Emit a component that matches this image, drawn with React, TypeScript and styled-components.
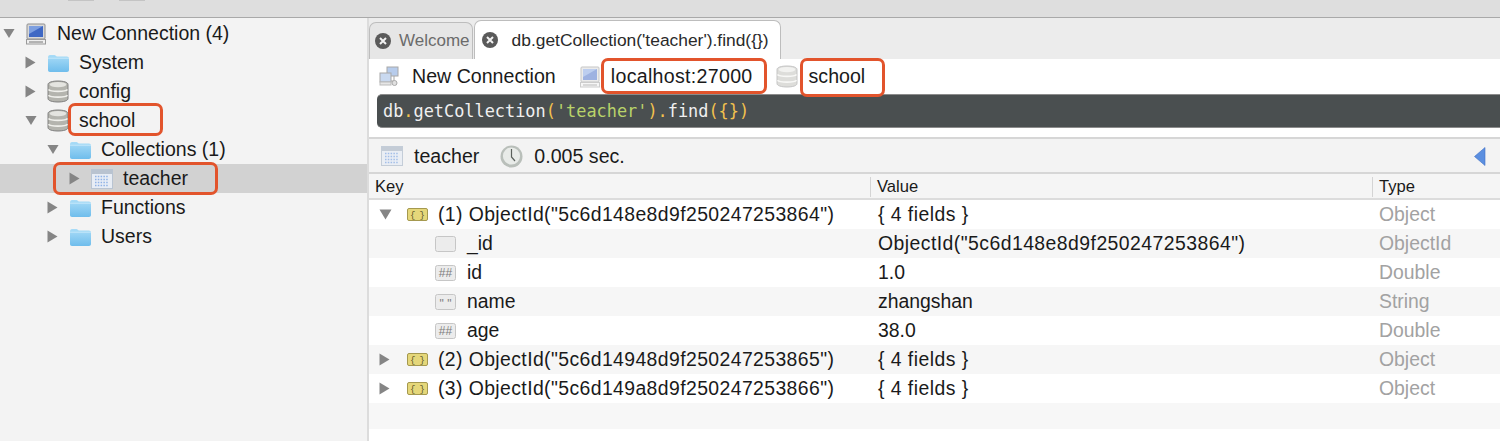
import React from "react";
import styled, { createGlobalStyle } from "styled-components";

const Global = createGlobalStyle`
  html, body {
    margin: 0;
    padding: 0;
    background: #ffffff;
    overflow: hidden;
  }
  body {
    font-family: "Liberation Sans", Arial, sans-serif;
    color: #1a1a1a;
  }
`;

const Window = styled.div`
  width: 1500px;
  height: 441px;
  display: flex;
  flex-direction: column;
  overflow: hidden;
`;
const TitleBar = styled.div`
  height: 17px;
  flex: none;
  display: flex;
  align-items: flex-start;
  gap: 25px;
  padding-left: 68px;
  background: #dedede;
  border-bottom: 1px solid #a9a9a9;
`;
const TitleBump = styled.div`
  width: 26px;
  height: 1px;
  background: #c4c4c4;
`;
const Body = styled.div`
  flex: 1;
  display: flex;
  min-height: 0;
`;

/* left tree */
const Sidebar = styled.aside`
  width: 367px;
  flex: none;
  padding-top: 1px;
  background: #f3f3f3;
  border-right: 2px solid #dcdcdc;
`;
const TreeRow = styled.div<{ $depth: number; $selected?: boolean }>`
  position: relative;
  height: 29px;
  display: flex;
  align-items: center;
  padding-left: ${(p) => 3 + p.$depth * 22}px;
  font-size: 19.5px;
  background: ${(p) => (p.$selected ? "#d2d2d2" : "transparent")};
`;
const Twisty = styled.span`
  width: 12px;
  flex: none;
  margin-right: 10px;
  display: flex;
`;
const IconSlot = styled.span`
  width: 22px;
  height: 24px;
  flex: none;
  margin-right: 10px;
  display: flex;
  align-items: center;
  justify-content: center;
`;
const Callout = styled.div<{ $x: number; $y: number; $w: number; $h: number }>`
  position: absolute;
  left: ${(p) => p.$x}px;
  top: ${(p) => p.$y}px;
  width: ${(p) => p.$w}px;
  height: ${(p) => p.$h}px;
  box-sizing: border-box;
  border: 3.5px solid #e2542c;
  border-radius: 7px;
`;

/* right side */
const Main = styled.main`
  flex: 1;
  min-width: 0;
  display: flex;
  flex-direction: column;
  background: #ffffff;
`;
const TabBar = styled.div`
  height: 41px;
  flex: none;
  display: flex;
  align-items: flex-end;
  gap: 1px;
  background: #ececec;
`;
const Tab = styled.div<{ $active?: boolean }>`
  height: ${(p) => (p.$active ? 39 : 37)}px;
  box-sizing: border-box;
  display: flex;
  align-items: center;
  padding: ${(p) => (p.$active ? "0 11px 0 7px" : "0 2px 0 5px")};
  font-size: ${(p) => (p.$active ? 17.4 : 17)}px;
  color: ${(p) => (p.$active ? "#2a2a2a" : "#6b6b6b")};
  background: ${(p) => (p.$active ? "#ffffff" : "#e6e6e6")};
  border: 1px solid #bdbdbd;
  border-bottom: none;
  border-radius: 7px 7px 0 0;
`;
const TabClose = styled.span<{ $active?: boolean }>`
  display: flex;
  margin-right: ${(p) => (p.$active ? 14 : 8)}px;
`;
const ConnectionBar = styled.div`
  position: relative;
  height: 35px;
  flex: none;
  display: flex;
  align-items: center;
  padding-left: 10px;
  font-size: 19.6px;
`;
const BarIcon = styled.span<{ $gap: number }>`
  display: flex;
  flex: none;
  margin-right: ${(p) => p.$gap}px;
`;
const BarText = styled.span<{ $gap?: number; $tracking?: number }>`
  margin-right: ${(p) => p.$gap ?? 0}px;
  letter-spacing: ${(p) => p.$tracking ?? 0}px;
  white-space: nowrap;
`;
const QueryBar = styled.div`
  height: 34px;
  flex: none;
  display: flex;
  align-items: center;
  margin-left: 8px;
  padding-left: 6px;
  background: #4a4f50;
  border-top: 1px solid #8c8c8c;
  border-bottom: 1px solid #8c8c8c;
  box-sizing: border-box;
  border-radius: 5px 0 0 5px;
  font: 16.9px "DejaVu Sans Mono", "Liberation Mono", monospace;
  color: #f0f0f0;
  white-space: pre;
`;
const Punct = styled.span`
  color: #f2c14e;
`;
const Str = styled.span`
  color: #b9d36a;
`;
const QueryGap = styled.div`
  height: 9px;
  flex: none;
`;
const ResultBar = styled.div`
  height: 37px;
  flex: none;
  box-sizing: border-box;
  display: flex;
  align-items: center;
  padding: 1px 14px 0 12px;
  font-size: 19.6px;
  background: #f3f3f3;
  border-top: 2px solid #d6d6d6;
  border-bottom: 2px solid #d6d6d6;
`;
const Spacer = styled.div`
  flex: 1;
`;
const Table = styled.div`
  flex: 1;
  display: flex;
  flex-direction: column;
  min-height: 0;
`;
const Columns = styled.div`
  display: grid;
  grid-template-columns: 501px 502px 1fr;
`;
const HeaderRow = styled(Columns)`
  height: 26px;
  flex: none;
  box-sizing: border-box;
  font-size: 16.6px;
  background: #f5f5f5;
  border-bottom: 2px solid #dcdcdc;
`;
const HeaderCell = styled.div<{ $divider?: boolean }>`
  display: flex;
  align-items: center;
  padding-left: 6px;
  margin: 3px 0 1px;
  border-left: ${(p) => (p.$divider ? "1px solid #d4d4d4" : "none")};
`;
const DataRow = styled(Columns)<{ $odd: boolean }>`
  height: 29px;
  flex: none;
  font-size: 19.4px;
  align-items: center;
  background: ${(p) => (p.$odd ? "#ffffff" : "#f6f6f6")};
`;
const KeyCell = styled.div<{ $child?: boolean }>`
  display: flex;
  align-items: center;
  padding-left: ${(p) => (p.$child ? 66 : 10)}px;
  letter-spacing: ${(p) => (p.$child ? 0 : 0.4)}px;
  white-space: nowrap;
`;
const KeyTwisty = styled.span`
  width: 13px;
  flex: none;
  margin-right: 15px;
  display: flex;
`;
const KeyIcon = styled.span<{ $gap: number }>`
  width: 21px;
  flex: none;
  margin-right: ${(p) => p.$gap}px;
  display: flex;
`;
const ValueCell = styled.div<{ $wide: boolean }>`
  padding-left: 8px;
  letter-spacing: ${(p) => (p.$wide ? 0.45 : 0)}px;
  white-space: nowrap;
`;
const TypeCell = styled.div`
  padding-left: 7px;
  color: #a2a2a2;
`;
const TableEnd = styled.div`
  height: 26px;
  flex: none;
  background: #f7f7f7;
`;

const Triangle = ({ open }: { open?: boolean }) =>
  open ? (
    <svg width="13" height="11" viewBox="0 0 13 11">
      <path d="M0.5 0.5H12.5L6.5 10.5Z" fill="#858585" />
    </svg>
  ) : (
    <svg width="11" height="13" viewBox="0 0 11 13">
      <path d="M0.5 0.5L10.5 6.5L0.5 12.5Z" fill="#858585" />
    </svg>
  );

const FolderIcon = () => (
  <svg width="22" height="18" viewBox="0 0 22 18">
    <defs>
      <linearGradient id="folderFill" x1="0" y1="0" x2="0" y2="1">
        <stop offset="0" stopColor="#a9dcf7" />
        <stop offset="1" stopColor="#6fbdec" />
      </linearGradient>
    </defs>
    <path
      d="M1 3.5C1 2.4 1.6 1 3 1H7.5C8.6 1 9 2.6 10 2.6H20C21 2.6 22 3.4 22 4.5V16C22 17 21.2 18 20 18H3C1.8 18 1 17 1 16Z"
      fill="url(#folderFill)"
    />
    <path d="M1 4.2H22" stroke="#cfeefb" strokeWidth="0.8" />
  </svg>
);

const DbIcon = ({ faded }: { faded?: boolean }) => (
  <svg width="22" height="23" viewBox="0 0 22 23" opacity={faded ? 0.45 : 1}>
    <path
      d="M1 4.5C1 2.2 5.5 1 11 1S21 2.2 21 4.5V18.5C21 20.8 16.5 22 11 22S1 20.8 1 18.5Z"
      fill="#b4b4ae"
      stroke="#777"
      strokeWidth="0.9"
    />
    <ellipse cx="11" cy="4.6" rx="8.4" ry="2.6" fill="#e4e4e0" />
    <path d="M1.5 9.6C3.5 12 18.5 12 20.5 9.6" fill="none" stroke="#f0f0ec" strokeWidth="1.6" />
    <path d="M1.5 15.3C3.5 17.7 18.5 17.7 20.5 15.3" fill="none" stroke="#f0f0ec" strokeWidth="1.6" />
  </svg>
);

const ComputerIcon = ({ faded }: { faded?: boolean }) => (
  <svg width="20" height="22" viewBox="0 0 20 22" opacity={faded ? 0.5 : 1}>
    <rect x="1" y="1" width="18" height="15" rx="1" fill="#d8d8d8" stroke="#8f8f8f" />
    <rect x="3" y="3" width="14" height="11" fill="#3f68c4" />
    <path d="M3 3H17L3 11Z" fill="#7d9fe0" />
    <rect x="0.5" y="16.5" width="19" height="4.5" fill="#efefef" stroke="#9a9a9a" />
    <path d="M3 19H17" stroke="#777" />
  </svg>
);

const NetworkIcon = () => (
  <svg width="20" height="21" viewBox="0 0 20 21" opacity="0.75">
    <rect x="8" y="1" width="11" height="9" fill="#9fbbe6" stroke="#8c8c8c" />
    <rect x="1" y="7" width="11" height="9" fill="#b8cdec" stroke="#8c8c8c" />
    <rect x="1" y="16" width="11" height="3" fill="#dedede" stroke="#a5a5a5" />
    <path d="M15 10V15H12" stroke="#888" fill="none" />
    <circle cx="15.5" cy="17" r="2.5" fill="#d6d6d6" stroke="#8e8e8e" />
  </svg>
);

const GridIcon = ({ dim }: { dim?: boolean }) => (
  <svg width="22" height="20" viewBox="0 0 22 20" opacity={dim ? 0.8 : 1}>
    <rect x="0.5" y="0.5" width="21" height="19" fill="#e8edf5" stroke="#b9c4d2" />
    <rect x="1" y="1" width="20" height="4" fill="#b9c3d0" />
    <path
      d="M4 7.5H18M4 10.5H18M4 13.5H18M4 16.5H18"
      stroke="#8fb2e6"
      strokeWidth="1.5"
      strokeDasharray="1.5 1.3"
    />
  </svg>
);

const ClockIcon = () => (
  <svg width="23" height="23" viewBox="0 0 23 23">
    <circle cx="11.5" cy="11.5" r="11" fill="#b9bfba" />
    <circle cx="11.5" cy="11" r="8.6" fill="#e8ebe8" />
    <path d="M11.5 4V12L15 16" fill="none" stroke="#5b605c" strokeWidth="1.2" />
  </svg>
);

const CloseCircle = () => (
  <svg width="16" height="16" viewBox="0 0 16 16">
    <circle cx="8" cy="8" r="8" fill="#5a5a5a" />
    <path d="M5 5L11 11M11 5L5 11" stroke="#f2f2f2" strokeWidth="2" />
  </svg>
);

const BackArrow = () => (
  <svg width="12" height="19" viewBox="0 0 12 19">
    <path d="M11 0.5V18.5L0.5 9.5Z" fill="#5b8fe0" stroke="#3f70c6" strokeWidth="0.6" />
  </svg>
);

const BsonObject = () => (
  <svg width="21" height="13" viewBox="0 0 21 13">
    <rect x="0.5" y="0.5" width="20" height="12" rx="1.5" fill="#e5d77a" stroke="#a5994f" />
    <text x="3" y="9.5" fontSize="9" fontFamily="Liberation Mono" fill="#5a5428">
      {"{"}
    </text>
    <text x="12.5" y="9.5" fontSize="9" fontFamily="Liberation Mono" fill="#5a5428">
      {"}"}
    </text>
  </svg>
);

const FieldIcon = ({ label }: { label: string }) => (
  <svg width="21" height="16" viewBox="0 0 21 16">
    <rect x="0.5" y="0.5" width="20" height="15" rx="2" fill="#ececec" stroke="#c6c6c6" />
    <text
      x="10.5"
      y={label === '" "' ? 14 : 12}
      fontSize="12"
      textAnchor="middle"
      fontFamily="Liberation Sans"
      fill="#7d7d7d"
    >
      {label}
    </text>
  </svg>
);

type TreeNode = {
  label: string;
  depth: number;
  open?: boolean;
  icon: React.ReactNode;
  selected?: boolean;
  callout?: { x: number; y: number; w: number; h: number };
};

const tree: TreeNode[] = [
  { label: "New Connection (4)", depth: 0, open: true, icon: <ComputerIcon /> },
  { label: "System", depth: 1, icon: <FolderIcon /> },
  { label: "config", depth: 1, icon: <DbIcon /> },
  {
    label: "school",
    depth: 1,
    open: true,
    icon: <DbIcon />,
    callout: { x: 68, y: -3, w: 95, h: 33 },
  },
  { label: "Collections (1)", depth: 2, open: true, icon: <FolderIcon /> },
  {
    label: "teacher",
    depth: 3,
    icon: <GridIcon />,
    selected: true,
    callout: { x: 53, y: -2, w: 165, h: 33 },
  },
  { label: "Functions", depth: 2, icon: <FolderIcon /> },
  { label: "Users", depth: 2, icon: <FolderIcon /> },
];

type Doc = {
  key: string;
  value: string;
  type: string;
  kind: "object" | "objectId" | "number" | "string";
  open?: boolean;
};

const docs: Doc[] = [
  { key: '(1) ObjectId("5c6d148e8d9f250247253864")', value: "{ 4 fields }", type: "Object", kind: "object", open: true },
  { key: "_id", value: 'ObjectId("5c6d148e8d9f250247253864")', type: "ObjectId", kind: "objectId" },
  { key: "id", value: "1.0", type: "Double", kind: "number" },
  { key: "name", value: "zhangshan", type: "String", kind: "string" },
  { key: "age", value: "38.0", type: "Double", kind: "number" },
  { key: '(2) ObjectId("5c6d14948d9f250247253865")', value: "{ 4 fields }", type: "Object", kind: "object" },
  { key: '(3) ObjectId("5c6d149a8d9f250247253866")', value: "{ 4 fields }", type: "Object", kind: "object" },
];

const fieldLabel = { objectId: "", number: "##", string: '" "' };

const App = (): JSX.Element => {
  return (
    <Window>
      <Global />
      <TitleBar>
        <TitleBump />
        <TitleBump />
      </TitleBar>
      <Body>
        <Sidebar>
          {tree.map((node) => (
            <TreeRow key={node.label} $depth={node.depth} $selected={node.selected}>
              <Twisty>
                <Triangle open={node.open} />
              </Twisty>
              <IconSlot>{node.icon}</IconSlot>
              {node.label}
              {node.callout && (
                <Callout
                  $x={node.callout.x}
                  $y={node.callout.y}
                  $w={node.callout.w}
                  $h={node.callout.h}
                />
              )}
            </TreeRow>
          ))}
        </Sidebar>
        <Main>
          <TabBar>
            <Tab>
              <TabClose>
                <CloseCircle />
              </TabClose>
              Welcome
            </Tab>
            <Tab $active>
              <TabClose $active>
                <CloseCircle />
              </TabClose>
              {"db.getCollection('teacher').find({})"}
            </Tab>
          </TabBar>
          <ConnectionBar>
            <BarIcon $gap={13}>
              <NetworkIcon />
            </BarIcon>
            <BarText $gap={24}>New Connection</BarText>
            <BarIcon $gap={11}>
              <ComputerIcon faded />
            </BarIcon>
            <BarText $gap={23} $tracking={0.3}>
              localhost:27000
            </BarText>
            <BarIcon $gap={11}>
              <DbIcon faded />
            </BarIcon>
            <BarText>school</BarText>
            <Callout $x={232} $y={-1} $w={166} $h={36} />
            <Callout $x={431} $y={-1} $w={85} $h={39} />
          </ConnectionBar>
          <QueryBar>
            db<Punct>.</Punct>getCollection<Punct>(</Punct>
            <Str>'teacher'</Str>
            <Punct>).</Punct>find<Punct>{"({})"}</Punct>
          </QueryBar>
          <QueryGap />
          <ResultBar>
            <BarIcon $gap={11}>
              <GridIcon dim />
            </BarIcon>
            <BarText $gap={21}>teacher</BarText>
            <BarIcon $gap={11}>
              <ClockIcon />
            </BarIcon>
            <BarText>0.005 sec.</BarText>
            <Spacer />
            <BackArrow />
          </ResultBar>
          <Table>
            <HeaderRow>
              <HeaderCell>Key</HeaderCell>
              <HeaderCell $divider>Value</HeaderCell>
              <HeaderCell $divider>Type</HeaderCell>
            </HeaderRow>
            {docs.map((doc, i) => (
              <DataRow key={doc.key} $odd={i % 2 === 0}>
                {doc.kind === "object" ? (
                  <KeyCell>
                    <KeyTwisty>
                      <Triangle open={doc.open} />
                    </KeyTwisty>
                    <KeyIcon $gap={10}>
                      <BsonObject />
                    </KeyIcon>
                    {doc.key}
                  </KeyCell>
                ) : (
                  <KeyCell $child>
                    <KeyIcon $gap={11}>
                      <FieldIcon label={fieldLabel[doc.kind]} />
                    </KeyIcon>
                    {doc.key}
                  </KeyCell>
                )}
                <ValueCell $wide={doc.kind === "objectId" || doc.kind === "object"}>{doc.value}</ValueCell>
                <TypeCell>{doc.type}</TypeCell>
              </DataRow>
            ))}
            <TableEnd />
          </Table>
        </Main>
      </Body>
    </Window>
  );
};

export default App;
